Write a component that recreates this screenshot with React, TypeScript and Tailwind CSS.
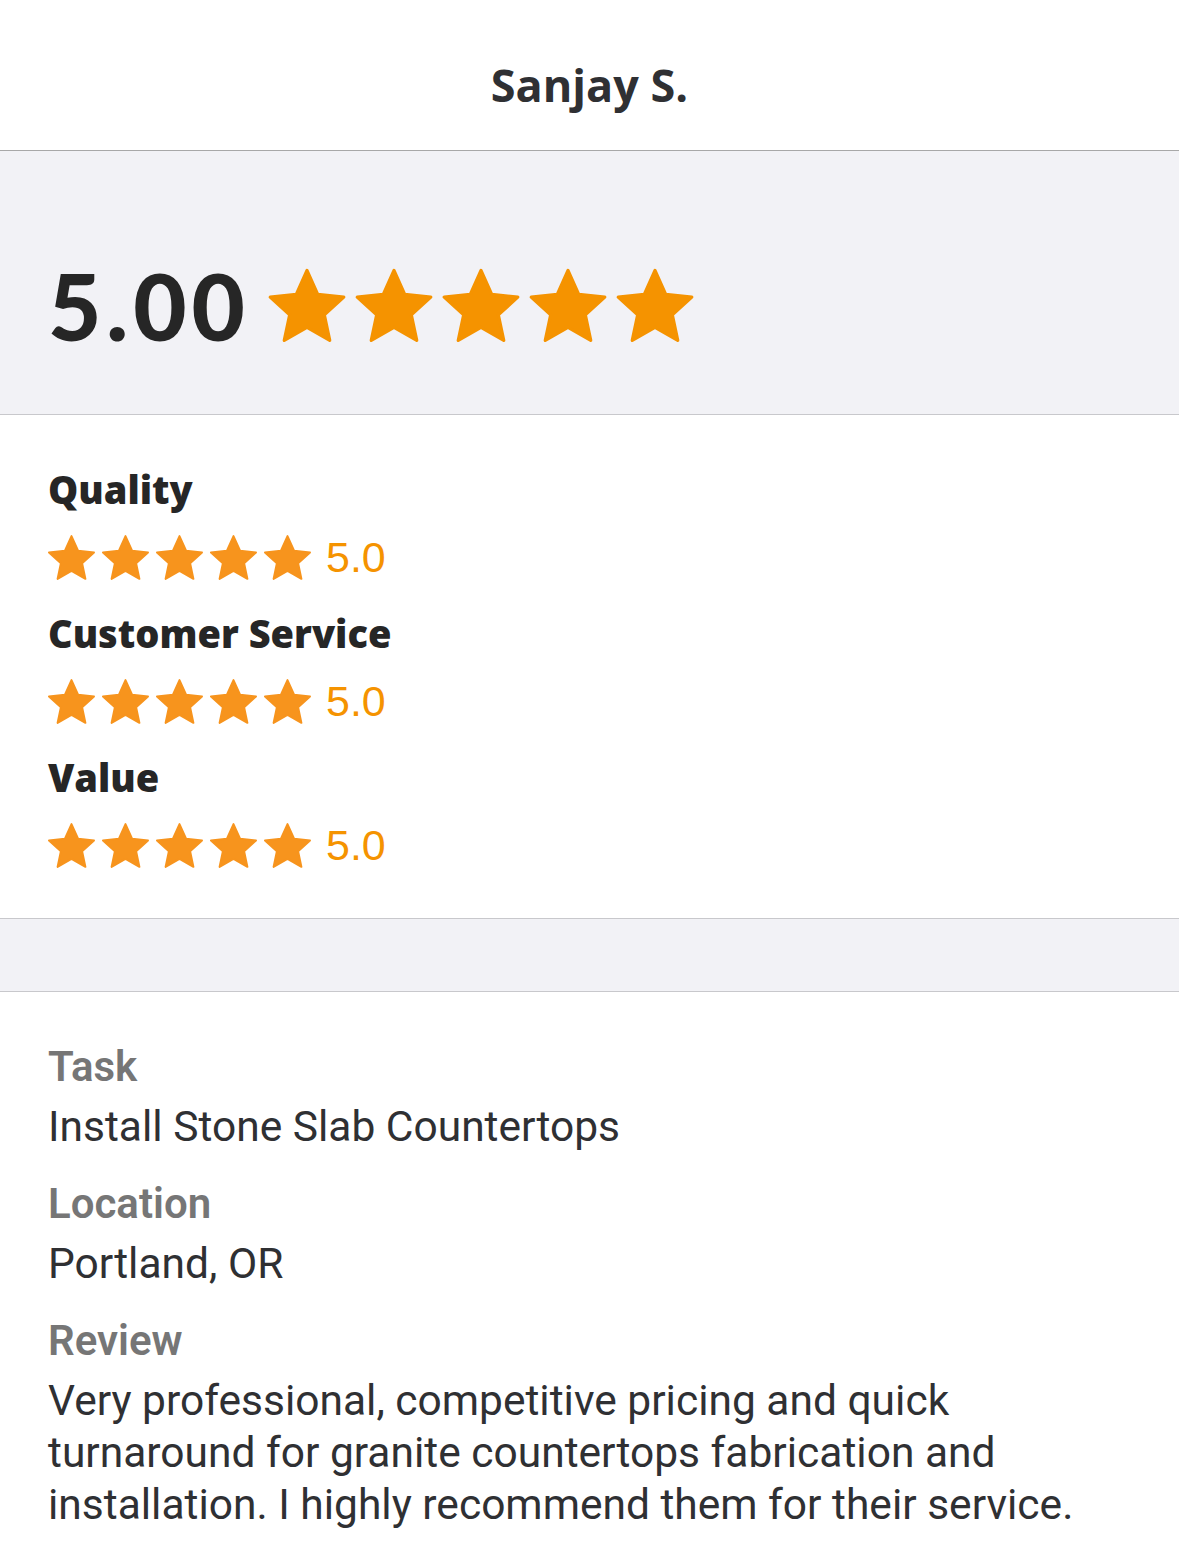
const RATINGS = [
  { label: 'Quality', score: '5.0' },
  { label: 'Customer Service', score: '5.0' },
  { label: 'Value', score: '5.0' },
];

// five-point star, fairly plump arms, fills the 24x23 box
const STAR_POINTS =
  '12,0.55 15.35,8.03 23.5,8.9 17.42,14.4 19.11,22.42 12,18.34 4.89,22.42 6.58,14.4 0.5,8.9 8.65,8.03';

function Star({ className, color }: { className: string; color: string }) {
  return (
    <svg viewBox="-0.5 -0.5 25 24" className={className} aria-hidden="true">
      <polygon
        points={STAR_POINTS}
        fill={color}
        stroke={color}
        strokeWidth="1"
        strokeLinejoin="round"
      />
    </svg>
  );
}

function Detail({ label, children, first }: { label: string; children: React.ReactNode; first?: boolean }) {
  return (
    <div className={first ? '' : 'mt-[27px]'}>
      <div className="text-[42px] leading-[48px] font-semibold text-[#767676]">{label}</div>
      <div className="mt-[10px] text-[42.5px] leading-[52px] text-[#2f3033]">{children}</div>
    </div>
  );
}

export default function App() {
  return (
    <div className="w-[1179px] min-h-[1550px] bg-white text-[#2f3033] font-['Roboto',sans-serif]">
      <header className="flex h-[151px] items-center justify-center border-b border-[#a8a8a8] pt-[20px]">
        <h1 className="font-['Open_Sans',sans-serif] text-[45px] font-bold text-[#2f3033]">Sanjay S.</h1>
      </header>

      <section className="flex h-[264px] items-center gap-[17px] border-b border-[#c8c8cc] bg-[#f2f2f6] px-12 pt-[46px]">
        <span className="font-['Lato',sans-serif] text-[92px] font-black leading-none tracking-[5px] text-[#262626]">
          5.00
        </span>
        <div className="flex gap-[7px]">
          {[0, 1, 2, 3, 4].map((i) => (
            <Star key={i} className="h-[77px] w-[80px]" color="#f59300" />
          ))}
        </div>
      </section>

      <section className="border-b border-[#c8c8cc] px-12 pt-[50px] pb-[45px]">
        {RATINGS.map((r, idx) => (
          <div key={r.label} className={idx === 0 ? '' : 'mt-[24px]'}>
            <div className="font-['Open_Sans',sans-serif] text-[38px] leading-[48px] font-extrabold text-[#262626]">
              {r.label}
            </div>
            <div className="mt-[16px] flex h-[56px] items-center">
              <div className="-ml-[1px] flex gap-[5px]">
                {[0, 1, 2, 3, 4].map((i) => (
                  <Star key={i} className="h-[47px] w-[49px]" color="#f7941d" />
                ))}
              </div>
              <span className="ml-[14px] font-['Liberation_Sans',sans-serif] text-[43px] leading-none text-[#f59300]">
                {r.score}
              </span>
            </div>
          </div>
        ))}
      </section>

      <div className="h-[73px] border-b border-[#c8c8cc] bg-[#f2f2f6]" />

      <section className="px-12 pt-[51px] pb-[20px]">
        <Detail label="Task" first>
          Install Stone Slab Countertops
        </Detail>
        <Detail label="Location">Portland, OR</Detail>
        <Detail label="Review">
          Very professional, competitive pricing and quick
          <br />
          turnaround for granite countertops fabrication and
          <br />
          installation. I highly recommend them for their service.
        </Detail>
      </section>
    </div>
  );
}
